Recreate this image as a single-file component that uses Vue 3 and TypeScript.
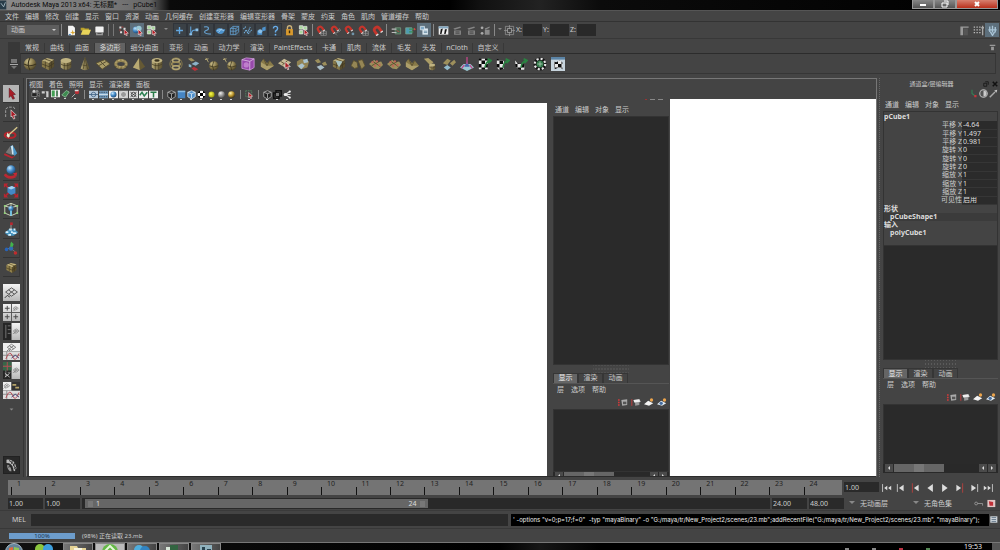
<script setup lang="ts">
import { ref } from 'vue'

interface Tab { name: string; size: string }
interface IconGroup { cls: string; icons: string[] }

const menus = ['文件', '编辑', '修改', '创建', '显示', '窗口', '资源', '动画', '几何缓存', '创建变形器', '编辑变形器', '骨架', '蒙皮', '约束', '角色', '肌肉', '管道缓存', '帮助']

const statusGroups: IconGroup[] = [
  { cls: 'w3', icons: ['new', 'open', 'save'] },
  { cls: 'sep double', icons: [] },
  { cls: 'w3', icons: ['sel-h', 'sel-o', 'sel-c'] },
  { cls: 'arrow', icons: [] },
  { cls: 'w8 boxed', icons: ['m-plus', 'm-joint', 'm-curve', 'm-surf', 'm-lattice', 'm-part', 'm-render', 'm-help'] },
  { cls: 'w2', icons: ['lock', 'sel-c'] },
  { cls: 'sep', icons: [] },
  { cls: 'w5', icons: ['mag-grid', 'mag-curve', 'mag-point', 'mag-grid', 'mag'] },
  { cls: 'sep', icons: [] },
  { cls: 'w2', icons: ['io-in', 'io-out'] },
  { cls: 'w1', icons: ['history'] },
  { cls: 'sep', icons: [] },
  { cls: 'w4', icons: ['clap', 'clap-dim', 'clap-dim', 'clap-set'] },
  { cls: 'sep', icons: [] },
  { cls: 'arrow small', icons: [] },
  { cls: 'w1', icons: ['target'] },
]
const lit = new Set(['sel-o', 'history', 'r-channel'])

const shelfTabs: Tab[] = [
  { name: '常规', size: 's2' }, { name: '曲线', size: 's2' }, { name: '曲面', size: 's2' },
  { name: '多边形', size: 's3' }, { name: '细分曲面', size: 's4' }, { name: '变形', size: 's2' },
  { name: '动画', size: 's2' }, { name: '动力学', size: 's3' }, { name: '渲染', size: 's2' },
  { name: 'PaintEffects', size: 's6' }, { name: '卡通', size: 's2' }, { name: '肌肉', size: 's2' },
  { name: '流体', size: 's2' }, { name: '毛发', size: 's2' }, { name: '头发', size: 's2' },
  { name: 'nCloth', size: 's3' }, { name: '自定义', size: 's3' },
]
const activeShelf = ref('多边形')

const shelfIcons = ['p-sphere', 'p-cube', 'p-cyl', 'p-cone', 'p-plane', 'p-torus', 'p-pyr', 'p-pipe', 'p-helix', 'p-soccer', 'p-sphere-s', 'p-sphere-s', 'p-smooth', 'p-bevel', 'p-select', 'p-combine', 'p-two', 'p-wedge', 'p-pair', 'p-dots', 'p-dots', 'p-bevel', 'p-tube', 'p-blue', 'p-axis', 'k-plane', 'k-cyl', 'k-sph', 'k-auto', 'k-uv']

const panelMenus = ['视图', '着色', '照明', '显示', '渲染器', '面板']
const panelGroups: string[][] = [
  ['v-cam', 'v-cam2', 'v-green', 'v-leaf', 'v-pin'],
  ['v-grid', 'v-film', 'v-ball', 'v-gate', 'v-cross', 'v-wave', 'v-text'],
  ['v-wire', 'v-blue', 'v-wblue', 'v-check', 'v-yellow', 'v-grey', 'v-gold'],
  ['v-iso'],
  ['v-wire', 'v-xray', 'v-share'],
]

const tools = ['t-select', 't-lasso', 't-paint', 't-move', 't-rotate', 't-scale', 't-univ', 't-soft', 't-show', 't-last']
const layouts = ['l-persp', 'l-four', 'l-outl', 'l-graph', 'l-hyper', 'l-mix', 'l-more']
const activeTool = ref('t-select')

const channelMenus = ['通道', '编辑', '对象', '显示']
const layerTabs = ['显示', '渲染', '动画']
const layerMenus = ['层', '选项', '帮助']
const layerIcons = ['y-a', 'y-b', 'y-c', 'y-d']
const attributes = ref([
  { label: '平移 X', value: '-4.64' }, { label: '平移 Y', value: '1.497' }, { label: '平移 Z', value: '0.981' },
  { label: '旋转 X', value: '0' }, { label: '旋转 Y', value: '0' }, { label: '旋转 Z', value: '0' },
  { label: '缩放 X', value: '1' }, { label: '缩放 Y', value: '1' }, { label: '缩放 Z', value: '1' },
  { label: '可见性', value: '启用' },
])
const playIcons = ['a-start', 'a-prevf', 'a-prevk', 'a-back', 'a-play', 'a-nextk', 'a-nextf', 'a-end']
const taskIcons = ['w-folder', 'w-green', 'w-qq', 'w-pic', 'w-maya']
const command = "' -options \"v=0;p=17;f=0\"  -typ \"mayaBinary\" -o \"G:/maya/tr/New_Project2/scenes/23.mb\";addRecentFile(\"G:/maya/tr/New_Project2/scenes/23.mb\", \"mayaBinary\");"
</script>

<template>
  <div class="app">
    <svg class="defs" aria-hidden="true">
      <defs>
        <radialGradient id="gTan" cx=".35" cy=".3" r=".8"><stop offset="0" stop-color="#e2d49a" /><stop offset=".5" stop-color="#96854e" /><stop offset="1" stop-color="#3c341c" /></radialGradient>
        <linearGradient id="gTanL"><stop offset="0" stop-color="#c8b97e" /><stop offset="1" stop-color="#5e522d" /></linearGradient>
        <radialGradient id="gBlue" cx=".35" cy=".3" r=".8"><stop offset="0" stop-color="#c2e4fa" /><stop offset=".5" stop-color="#3f86c4" /><stop offset="1" stop-color="#173c66" /></radialGradient>
        <radialGradient id="gYel" cx=".4" cy=".4" r=".7"><stop offset="0" stop-color="#ffff50" /><stop offset="1" stop-color="#8b8b00" /></radialGradient>
        <radialGradient id="gGrey" cx=".35" cy=".3" r=".8"><stop offset="0" stop-color="#eee" /><stop offset="1" stop-color="#444" /></radialGradient>
        <radialGradient id="gGold" cx=".35" cy=".3" r=".8"><stop offset="0" stop-color="#fff4b0" /><stop offset=".5" stop-color="#c09a30" /><stop offset="1" stop-color="#2c2410" /></radialGradient>
        <linearGradient id="gWhite" x2="0" y2="1"><stop offset="0" stop-color="#f4f4f4" /><stop offset="1" stop-color="#b8b8b8" /></linearGradient>
        <pattern id="chk" width="8" height="8" patternUnits="userSpaceOnUse"><rect width="8" height="8" fill="#fff" /><path d="M0 0h4v4H0zM4 4h4v4H4z" fill="#000" /></pattern>
      </defs>

      <symbol id="new" viewBox="0 0 16 16"><path d="M3 1h7l3 3v11H3z" fill="#f4f4f4" /><path d="M9 7l2 3 3 1-3 1-1 3-1-3-3-1 3-1z" fill="#d9a52c" /><path d="M4 13h3v2H4z" fill="#4e86b8" /></symbol>
      <symbol id="open" viewBox="0 0 16 16"><path d="M1 4h5l1 1h6v3H1z" fill="#b9a02a" /><path d="M1 14l3-7h12l-3 7z" fill="#e8d35a" /></symbol>
      <symbol id="save" viewBox="0 0 16 16"><rect x="2" y="2" width="12" height="9" rx="1" fill="#f2f2f2" /><path d="M3 11h10v4H3z" fill="#999" /><path d="M5 12h6v1H5z" fill="#333" /></symbol>
      <symbol id="cursor" viewBox="0 0 8 10"><path d="M1 0l6 6-3 .3L5.500 9 4 9.600 2.700 6.800 1 8z" fill="#b81c24" stroke="#fff" stroke-width=".8" /></symbol>
      <symbol id="sel-h" viewBox="0 0 16 16"><path d="M2 2h3v3H2zM8 4h3v3H8zM3 9h3v3H3z" fill="#ddd" /><path d="M5 3h3M3 6v3" stroke="#c44" /><use href="#cursor" x="8" y="6" width="8" height="10" /></symbol>
      <symbol id="sel-o" viewBox="0 0 16 16"><circle cx="6" cy="7" r="5" fill="url(#gBlue)" /><circle cx="10" cy="5" r="4" fill="#9cc8d4" /><use href="#cursor" x="8" y="6" width="8" height="10" /></symbol>
      <symbol id="sel-c" viewBox="0 0 16 16"><path d="M2 1h5v5H2zM8 2h5v5H8zM2 8h5v5H2z" fill="#a8d89c" stroke="#eee" /><use href="#cursor" x="8" y="6" width="8" height="10" /></symbol>
      <symbol id="m-plus" viewBox="0 0 16 16"><path d="M8 3v10M3 8h10" stroke="#62a6df" stroke-width="2" /></symbol>
      <symbol id="m-joint" viewBox="0 0 16 16"><path d="M4 2v11l3-5 6-1" fill="none" stroke="#62a6df" stroke-width="1.500" /><path d="M2 12h4v3H2zM11 5h4v4h-4z" fill="#8cc1e8" /></symbol>
      <symbol id="m-curve" viewBox="0 0 16 16"><path d="M3 3c9-2 7 4 3 5s-3 6 7 5" fill="none" stroke="#6aa8da" stroke-width="1.500" /></symbol>
      <symbol id="m-surf" viewBox="0 0 16 16"><path d="M1 8q4-5 8-3t6 1q-2 7-7 7T1 8z" fill="#4c92cc" /><path d="M3 8q5-3 10 0M5 11l5-6" fill="none" stroke="#c1e2f8" /></symbol>
      <symbol id="m-lattice" viewBox="0 0 16 16"><path d="M2 5l4-3h8v8l-4 4H2zM2 5h8l4-3M10 5v9M6 2v12M2 9h8l4-3" fill="none" stroke="#68abe0" /></symbol>
      <symbol id="m-part" viewBox="0 0 16 16"><path d="M3 12l3-5 2 4 4-8M2 6l4-4M9 13l5-6" stroke="#75b3e2" stroke-width="1.500" fill="none" stroke-dasharray="2 1" /></symbol>
      <symbol id="m-render" viewBox="0 0 16 16"><path d="M2 8h7v6H2zM9 4l5-2v6l-5 1z" fill="#4d92cd" /><circle cx="6" cy="9" r="3" fill="#8cc1e9" /></symbol>
      <symbol id="m-help" viewBox="0 0 16 16"><path d="M5 5q0-3 3-3t3 3q0 2-3 4v2" fill="none" stroke="#68adea" stroke-width="2" /><circle cx="8" cy="14" r="1.300" fill="#68adea" /></symbol>
      <symbol id="lock" viewBox="0 0 16 16"><path d="M5 7V4q0-3 3-3t3 3v3" fill="none" stroke="#ccb27a" stroke-width="2" /><rect x="3" y="6" width="10" height="9" fill="#d99a2e" /><path d="M7 8h2v4H7z" fill="#3a2808" /></symbol>
      <symbol id="mag" viewBox="0 0 16 16"><g transform="rotate(-35 8 8)"><path d="M4 13V7q0-4 4-4t4 4v6" fill="none" stroke="#c5352c" stroke-width="4" /><path d="M2 12h4v2H2zM10 12h4v2h-4z" fill="#ddd" /></g></symbol>
      <symbol id="mag-grid" viewBox="0 0 16 16"><path d="M7 9h8v6H7zM11 9v6M7 12h8" fill="none" stroke="#999" /><use href="#mag" width="13" height="13" /></symbol>
      <symbol id="mag-curve" viewBox="0 0 16 16"><path d="M13 5q5 3-1 5t-2 5" fill="none" stroke="#999" /><use href="#mag" width="13" height="13" /></symbol>
      <symbol id="mag-point" viewBox="0 0 16 16"><use href="#mag" width="13" height="13" /><circle cx="13" cy="13" r="2" fill="#7094a8" /></symbol>
      <symbol id="io-in" viewBox="0 0 16 16"><path d="M6 4h8v9H6z" fill="#456b54" stroke="#7a9c83" /><path d="M1 6h7M1 11h7" stroke="#bbb" stroke-width="1.500" /><path d="M8 8l4 2" stroke="#c44" /></symbol>
      <symbol id="io-out" viewBox="0 0 16 16"><path d="M1 4h9v9H1z" fill="#4d9bb0" stroke="#7dab92" /><path d="M6 6h8M6 10h6" stroke="#3d8d56" stroke-width="2" /><path d="M13 4l3 2-3 2z" fill="#d44" /></symbol>
      <symbol id="history" viewBox="0 0 16 16"><path d="M5 5h8v9H5z" fill="#dce8f0" /><path d="M2 2h6v5H2z" fill="#7fa8c6" stroke="#e4eef4" /><path d="M7 9h5M7 11h5" stroke="#49718e" /></symbol>
      <symbol id="clap" viewBox="0 0 16 16"><path d="M1 2h14v12H1z" fill="#eee" /><path d="M1 2h14v3H1z" fill="#83a7bf" /><path d="M4 6l3-1-2 8H3zM10 6h3l-2 7H9z" fill="#111" /></symbol>
      <symbol id="clap-dim" viewBox="0 0 16 16"><path d="M3 8h10v6H3zM2 5l10-3 1 2-9 3z" fill="#858585" /><path d="M5 10h6M5 12h6" stroke="#333" /></symbol>
      <symbol id="clap-set" viewBox="0 0 16 16"><path d="M7 7h7v7H7zM7 5l7-3v2l-6 3z" fill="#8b8b8b" /><circle cx="3" cy="4" r="2" fill="#aaa" /><circle cx="3" cy="12" r="2" fill="#aaa" /></symbol>
      <symbol id="target" viewBox="0 0 16 16"><path d="M2 2h12v12H2zM8 0v16M0 8h16" fill="none" stroke="#999" /><path d="M5 5h6v6H5z" fill="#444" stroke="#bbb" /></symbol>
      <symbol id="r-attr" viewBox="0 0 16 16"><path d="M2 2h12v2H6v11H2z" fill="#999" /><path d="M7 5h6v10H7z" fill="#555" /></symbol>
      <symbol id="r-tool" viewBox="0 0 16 16"><path d="M2 2v12M6 2v12M10 2v12" stroke="#bbb" stroke-width="2" stroke-dasharray="2 2" /><path d="M14 1v14M12 4h4" stroke="#aaa" stroke-width="2" /></symbol>
      <symbol id="r-channel" viewBox="0 0 16 16"><path d="M4 2v8M8 1v10M12 3v8M2 7h12M5 10l3 5 3-5" stroke="#a9c4d6" stroke-width="2" fill="none" /></symbol>

      <symbol id="p-sphere" viewBox="0 0 16 16"><circle cx="8" cy="8" r="7" fill="url(#gTan)" /><path d="M1 8q7 4 14 0M8 1q-4 7 0 14" fill="none" stroke="#3c341b" stroke-width="1.200" /></symbol>
      <symbol id="p-cube" viewBox="0 0 16 16"><path d="M1 4l6-3 8 2-6 4z" fill="#cbbb7f" /><path d="M1 4l8 3v8l-8-4z" fill="#91814b" /><path d="M9 7l6-4v8l-6 4z" fill="#5b4f2b" /><path d="M5 5v8M12 5v8M1 8l8 3 6-4M4 2l8 3" stroke="#40371c" fill="none" stroke-width=".8" /></symbol>
      <symbol id="p-cyl" viewBox="0 0 16 16"><path d="M2 4v8q6 5 12 0V4z" fill="url(#gTanL)" /><ellipse cx="8" cy="4" rx="6" ry="3" fill="#d2c38a" /><path d="M2 8q6 4 12 0M6 7v8M10 7v8" stroke="#4a4022" fill="none" stroke-width=".9" /></symbol>
      <symbol id="p-cone" viewBox="0 0 16 16"><path d="M8 0l5 13q-5 4-10 0z" fill="url(#gTanL)" /><path d="M8 1L6 14M8 1l3 13M5 9q3 2 6 0" stroke="#4a4022" fill="none" stroke-width=".8" /></symbol>
      <symbol id="p-plane" viewBox="0 0 16 16"><path d="M0 7l10-4 6 5-9 6z" fill="#b8a96c" stroke="#5c502c" /><path d="M5 5l6 6M3 10l9-5" stroke="#54492a" /></symbol>
      <symbol id="p-torus" viewBox="0 0 16 16"><ellipse cx="8" cy="8" rx="6" ry="4" fill="none" stroke="#a18f55" stroke-width="3.500" /><ellipse cx="8" cy="7.500" rx="6" ry="4" fill="none" stroke="#dbcc91" stroke-dasharray="2 2" /><path d="M3 10l-2 2M8 12v2M13 10l2 2" stroke="#4c4224" /></symbol>
      <symbol id="p-pyr" viewBox="0 0 16 16"><path d="M8 1L1 12l8 3z" fill="#c8b779" /><path d="M8 1l7 10-6 4z" fill="#6a5c32" /></symbol>
      <symbol id="p-pipe" viewBox="0 0 16 16"><use href="#p-cyl" width="16" height="16" /><ellipse cx="8" cy="4" rx="3" ry="1.500" fill="#3a321b" /></symbol>
      <symbol id="p-helix" viewBox="0 0 16 16"><circle cx="8" cy="8" r="7" fill="none" stroke="#978750" /><ellipse cx="8" cy="4" rx="4" ry="2" fill="none" stroke="#c3b37a" stroke-width="1.800" /><ellipse cx="8" cy="8" rx="5" ry="2" fill="none" stroke="#a8975c" stroke-width="1.800" /><ellipse cx="8" cy="12" rx="4" ry="2" fill="none" stroke="#c3b37a" stroke-width="1.800" /></symbol>
      <symbol id="p-soccer" viewBox="0 0 16 16"><path d="M1 2l4-1 4 3-4 1z" fill="#a8995f" /><path d="M5 8l5-3 4 2-4 3zM2 8l3 1v3l-3-1z" fill="#96c3dc" /><path d="M5 13l3-2 5 3-4 2z" fill="#c8323a" /></symbol>
      <symbol id="p-sphere-s" viewBox="0 0 16 16"><use href="#p-sphere" x="4" y="4" width="12" height="12" /><path d="M0 3l4-1M1 1l3 5" stroke="#cbbb7f" /></symbol>
      <symbol id="p-smooth" viewBox="0 0 16 16"><path d="M1 3l5-2 9 1v10l-5 3-9-2z" fill="#a34aba" stroke="#d79be6" /><path d="M1 3l9 2 5-3M10 5v10" stroke="#ecc9f4" fill="none" /><circle cx="6" cy="9" r="3" fill="#d087df" /></symbol>
      <symbol id="p-bevel" viewBox="0 0 16 16"><path d="M1 6l3-4 4 5 3-3 5 6-8 5-7-4z" fill="#92824a" /><path d="M1 6l7 4 8 0-8 5-7-4z" fill="#bbab70" /><path d="M4 2l4 8 3-6" fill="none" stroke="#5a4e2b" /></symbol>
      <symbol id="p-select" viewBox="0 0 16 16"><path d="M0 7l7-5 8 4-7 6z" fill="#d8cba2" /><path d="M3 5l8 5M5 9l6-5" stroke="#5a4e2b" /><use href="#cursor" x="7" y="5" width="8" height="10" /></symbol>
      <symbol id="p-combine" viewBox="0 0 16 16"><path d="M1 5l5-3 9 3-2 7-7 2-5-4z" fill="#9b8b55" /><path d="M2 10l5-3 3 3-4 4zM8 3l5-1 1 4-5 1z" fill="#b6d3df" /></symbol>
      <symbol id="p-two" viewBox="0 0 16 16"><path d="M1 4l4-2 3 4-4 1zM9 7l4-2 2 4-4 1z" fill="#a8995f" /><path d="M3 11l5-2 4 3-5 3z" fill="#b8cfdb" /></symbol>
      <symbol id="p-wedge" viewBox="0 0 16 16"><use href="#p-cube" width="16" height="16" /><path d="M4 4l8 1-4 7z" fill="#b5d3d2" /></symbol>
      <symbol id="p-pair" viewBox="0 0 16 16"><path d="M0 10l3-6 4 2 1 6-4 1zM8 4l5-1 3 7-4 4z" fill="#a19058" stroke="#5e522e" /></symbol>
      <symbol id="p-dots" viewBox="0 0 16 16"><path d="M0 8l6-5 3 3 5-1 2 4-5 5-5-1z" fill="#aa9a60" /><path d="M3 4l10 7M3 10l9-5" stroke="#594c28" /><g fill="#d26c5c"><circle cx="4" cy="6" r="1.300" /><circle cx="9" cy="5" r="1.300" /><circle cx="7" cy="10" r="1.300" /><circle cx="12" cy="9" r="1.300" /></g></symbol>
      <symbol id="p-tube" viewBox="0 0 16 16"><path d="M1 2l5-1 6 5-4 3z" fill="#b8a86b" /><use href="#p-cyl" x="6" y="7" width="9" height="9" /></symbol>
      <symbol id="p-blue" viewBox="0 0 16 16"><path d="M1 7l5-5 4 2-4 5zM9 7l5-4 2 3-4 4z" fill="#ab9b60" /><path d="M2 12l4-3 4 3-4 3z" fill="#9dccdf" /></symbol>
      <symbol id="p-axis" viewBox="0 0 16 16"><path d="M0 12l4-4h8l4 4-8 4z" fill="#a8dce8" /><path d="M5 11l3-6 3 6z" fill="#466cb8" /><path d="M8 0v8M5 9L2 13M11 9l3 4" stroke="#d34893" stroke-width="1.500" /></symbol>
      <symbol id="k-arm" viewBox="0 0 16 16"><path d="M8 12q1-7 6-8M11 2l4 2-3 3" fill="none" stroke="#288c42" stroke-width="2" /></symbol>
      <symbol id="k-plane" viewBox="0 0 16 16"><path d="M1 2h10v12H1z" fill="url(#chk)" /><use href="#k-arm" width="16" height="16" /></symbol>
      <symbol id="k-cyl" viewBox="0 0 16 16"><path d="M1 2l4 2h4v9l-5 2-3-3z" fill="url(#chk)" /><use href="#k-arm" width="16" height="16" /></symbol>
      <symbol id="k-sph" viewBox="0 0 16 16"><path d="M1 2q1 7 10 6l2 6q-7 2-11-3z" fill="url(#chk)" /><use href="#k-arm" width="16" height="16" /></symbol>
      <symbol id="k-auto" viewBox="0 0 16 16"><circle cx="8" cy="8" r="7.500" fill="#111" /><circle cx="8" cy="8" r="6" fill="none" stroke="#fff" stroke-width="2.500" stroke-dasharray="2.400 2.300" /><circle cx="8" cy="8" r="4" fill="#2e7f48" /><path d="M8 5v6M5 8h6" stroke="#b5dec0" /></symbol>
      <symbol id="k-uv" viewBox="0 0 16 16"><path d="M0 0h16v16H0z" fill="#d8e7f1" /><path d="M0 0h16v3H0z" fill="#5f8db4" /><path d="M3 5l3 1 4-2 3 2v8l-4-2-5 2z" fill="url(#chk)" /></symbol>

      <symbol id="v-cam" viewBox="0 0 12 12"><path d="M1 5h7v5H1zM8 7l3-2v5z" fill="#222" stroke="#aaa" stroke-width=".7" /><circle cx="4" cy="3" r="2" fill="#ccc" /><circle cx="8" cy="3" r="2" fill="#888" /></symbol>
      <symbol id="v-cam2" viewBox="0 0 12 12"><path d="M1 3h4v3H1zM6 3h4v8H7V5z" fill="#ccc" /></symbol>
      <symbol id="v-green" viewBox="0 0 12 12"><path d="M0 1h12v10H0z" fill="#eee" /><path d="M1 2h4v8H1z" fill="#41a052" /><path d="M7 2h2v8H7z" fill="#256334" /></symbol>
      <symbol id="v-leaf" viewBox="0 0 12 12"><path d="M1 8l6-6 4 2-5 7z" fill="#3e8b50" stroke="#99c3a1" /></symbol>
      <symbol id="v-pin" viewBox="0 0 12 12"><path d="M1 11L6 6" stroke="#ccc" /><circle cx="8" cy="4" r="3" fill="#b82e35" /><path d="M5 1h5v2H5z" fill="#ddd" /></symbol>
      <symbol id="v-grid" viewBox="0 0 12 12"><path d="M0 1h12v10H0z" fill="#b8cadb" /><circle cx="6" cy="6" r="3" fill="none" stroke="#355a7e" /><path d="M0 6h12" stroke="#355a7e" /></symbol>
      <symbol id="v-film" viewBox="0 0 12 12"><path d="M0 1h12v10H0z" fill="#7da4c4" /><path d="M0 3h12M0 9h12" stroke="#203040" stroke-dasharray="2 1" /><path d="M0 6h12" stroke="#e4edf4" /></symbol>
      <symbol id="v-ball" viewBox="0 0 12 12"><path d="M0 1h12v10H0z" fill="#eee" /><circle cx="6" cy="6" r="4" fill="url(#gBlue)" /></symbol>
      <symbol id="v-gate" viewBox="0 0 12 12"><path d="M0 1h12v10H0z" fill="#ccc" /><circle cx="6" cy="6" r="4" fill="#999" stroke="#eee" /></symbol>
      <symbol id="v-cross" viewBox="0 0 12 12"><path d="M0 1h12v10H0z" fill="#ddd" /><path d="M2 3l8 6M2 9l8-6" stroke="#333" /><circle cx="6" cy="6" r="3" fill="none" stroke="#333" /></symbol>
      <symbol id="v-wave" viewBox="0 0 12 12"><path d="M0 1h12v10H0z" fill="#eee" /><path d="M1 7l3-4 3 5 4-5" fill="none" stroke="#2c8052" stroke-width="2" /></symbol>
      <symbol id="v-text" viewBox="0 0 12 12"><path d="M0 1h12v10H0z" fill="#eee" /><path d="M2 3h8M6 3v7" stroke="#297a47" stroke-width="2" /></symbol>
      <symbol id="v-wire" viewBox="0 0 12 12"><path d="M1 3l5-2 5 2v6l-5 3-5-3zM1 3l5 2 5-2M6 5v6" fill="#222" stroke="#bbb" /></symbol>
      <symbol id="v-blue" viewBox="0 0 12 12"><path d="M1 1h10v10H1z" fill="#4685c3" /><path d="M1 1h10v2H1z" fill="#8abbe2" /></symbol>
      <symbol id="v-wblue" viewBox="0 0 12 12"><path d="M1 3l5-2 5 2v6l-5 3-5-3z" fill="#4f8fcb" stroke="#e1edf6" /><path d="M1 3l5 2 5-2M6 5v6" stroke="#e1edf6" fill="none" /></symbol>
      <symbol id="v-check" viewBox="0 0 12 12"><circle cx="6" cy="6" r="5" fill="url(#chk)" /></symbol>
      <symbol id="v-yellow" viewBox="0 0 12 12"><circle cx="6" cy="6" r="4" fill="url(#gYel)" /></symbol>
      <symbol id="v-grey" viewBox="0 0 12 12"><circle cx="6" cy="6" r="4.500" fill="url(#gGrey)" /></symbol>
      <symbol id="v-gold" viewBox="0 0 12 12"><circle cx="6" cy="6" r="4.500" fill="url(#gGold)" /></symbol>
      <symbol id="v-iso" viewBox="0 0 12 12"><path d="M1 1h8v8H1z" fill="none" stroke="#579067" stroke-dasharray="2 1" /><use href="#cursor" x="4" y="3" width="7" height="9" /></symbol>
      <symbol id="v-xray" viewBox="0 0 12 12"><path d="M1 4h7v7H1zM4 1h7v7H4z" fill="none" stroke="#111" stroke-width="2" /><path d="M4 4h4v4H4z" fill="#777" /></symbol>
      <symbol id="v-share" viewBox="0 0 12 12"><path d="M9 2L3 6l6 4M4 6h6" fill="none" stroke="#ddd" stroke-width="1.500" /><circle cx="3" cy="6" r="2" fill="#eee" /><circle cx="9" cy="2" r="1.500" fill="#eee" /><circle cx="9" cy="10" r="1.500" fill="#eee" /></symbol>

      <symbol id="t-select" viewBox="0 0 18 18"><path d="M7 3l7 7-3 .5 2 4-2 1-2-4-2 2z" fill="#a91c26" stroke="#501018" stroke-width=".6" /></symbol>
      <symbol id="t-lasso" viewBox="0 0 18 18"><path d="M3 14V5l3-2h6l2 3" fill="none" stroke="#aaa" stroke-dasharray="3 1.500" /><path d="M9 6l6 6-3 .5 1.500 3-1.500 1-2-3.500-1 1z" fill="#a91c26" stroke="#ddd" stroke-width=".8" /></symbol>
      <symbol id="t-paint" viewBox="0 0 18 18"><ellipse cx="8" cy="12" rx="6" ry="3" fill="none" stroke="#b3252c" stroke-width="2.500" /><path d="M6 12L16 3" stroke="#d7c88c" stroke-width="1.500" /><path d="M5 9l3 4-2 2-2-2z" fill="#f0f0d8" /></symbol>
      <symbol id="t-move" viewBox="0 0 18 18"><path d="M3 10l5-7 2 10z" fill="#777" /><path d="M8 3l3-1 5 9-3 3z" fill="#4997c9" /><path d="M9 3l2-1 1 11-2-1z" fill="#d3e6f0" /><path d="M2 11l8 4 4-1-4 3-9-4z" fill="#bd2631" /></symbol>
      <symbol id="t-rotate" viewBox="0 0 18 18"><path d="M2 12q4 6 12 2" stroke="#ba2833" stroke-width="3" fill="none" /><circle cx="9" cy="7" r="5" fill="url(#gBlue)" /><path d="M11 11l5-1-1 5z" fill="#c42a34" /></symbol>
      <symbol id="t-scale" viewBox="0 0 18 18"><path d="M2 2l14 14M16 2L2 16" stroke="#b12530" stroke-width="2" /><path d="M1 1h5L1 6zM17 1h-5l5 5zM1 17v-5l5 5zM17 17v-5l-5 5z" fill="#b62731" /><path d="M5 6l5-2 4 2v6l-5 2-4-3z" fill="#4488c5" /><path d="M5 6l5-2 4 2-5 2z" fill="#a6d3f0" /></symbol>
      <symbol id="t-univ" viewBox="0 0 18 18"><path d="M2 5l7-3 7 3v8l-7 3-7-3zM2 5l7 2 7-2M9 2v14" fill="none" stroke="#d7e0c4" /><circle cx="9" cy="8" r="3" fill="url(#gBlue)" /><path d="M9 10v6" stroke="#72c6eb" stroke-width="2" /><path d="M1 4h2v2H1zM15 4h2v2h-2zM1 12h2v2H1zM15 12h2v2h-2z" fill="#8bd173" /></symbol>
      <symbol id="t-soft" viewBox="0 0 18 18"><path d="M2 13l4-4 6-1 5 4-5 4H6z" fill="#4693be" /><path d="M3 12h3M7 9h3M11 13h4M6 15h3M12 9h2M9 12h2" stroke="#d9f0fa" stroke-width="2" /><path d="M9 9V3" stroke="#aaa" /><path d="M8 1h3v3H8z" fill="#bb2730" /></symbol>
      <symbol id="t-show" viewBox="0 0 18 18"><path d="M9 9V3M9 9H4M9 9l5 4" stroke="#777" /><circle cx="9" cy="9" r="2.500" fill="#326caf" /><path d="M9 1l3 3-1 3H8z" fill="#42b34b" /><circle cx="14" cy="14" r="2" fill="#c02b2d" /><circle cx="4" cy="10" r="2" fill="#2863b8" /></symbol>
      <symbol id="t-last" viewBox="0 0 18 18"><use href="#p-cube" x="3" y="3" width="13" height="13" /></symbol>
      <symbol id="diamond" viewBox="0 0 18 14"><path d="M2 7l7-5 7 5-7 5zM5.500 4.500l7 5M5.500 9.500l7-5" fill="none" stroke="#444" /><path d="M1 14l3-3 3 2" stroke="#222" fill="none" /></symbol>
      <symbol id="l-persp" viewBox="0 0 18 18"><path d="M0 0h18v18H0z" fill="url(#gWhite)" /><use href="#diamond" x="1" y="2" width="16" height="13" /></symbol>
      <symbol id="l-four" viewBox="0 0 18 18"><path d="M0 0h18v18H0z" fill="url(#gWhite)" /><path d="M9 0v18M0 9h18" stroke="#555" /><path d="M4.500 2v5M2 4.500h5M4.500 11v5M2 13.500h5M13.500 11v5M11 13.500h5" stroke="#444" /><use href="#diamond" x="10" y="1" width="7" height="7" /></symbol>
      <symbol id="l-outl" viewBox="0 0 18 18"><path d="M0 0h18v18H0z" fill="#252525" /><path d="M3 2v14M5 3h3M5 7h3M5 11h3" stroke="#777" /><path d="M9 0h9v18H9z" fill="url(#gWhite)" /><use href="#diamond" x="10" y="4" width="8" height="9" /></symbol>
      <symbol id="graph" viewBox="0 0 18 9"><path d="M0 0h18v9H0z" fill="#ddd" /><path d="M4 0v9M0 4h18" stroke="#888" /><path d="M3 8q4-11 7-3t7-3" fill="none" stroke="#b84a55" /><path d="M9 7l4-3 4 3" fill="none" stroke="#447" /></symbol>
      <symbol id="l-graph" viewBox="0 0 18 18"><path d="M0 0h18v9H0z" fill="#eee" /><use href="#diamond" y="0" x="2" width="14" height="9" /><use href="#graph" y="9" width="18" height="9" /></symbol>
      <symbol id="l-hyper" viewBox="0 0 18 18"><use href="#l-outl" width="18" height="18" /><path d="M0 0h9v9H0z" fill="#376648" /><path d="M4 0h1v9H4zM0 4h9v1H0z" fill="#b94c56" /><path d="M2 12l5 4M7 12l-5 4" stroke="#ccc" /></symbol>
      <symbol id="l-mix" viewBox="0 0 18 18"><path d="M0 0h9v9H0z" fill="#eee" /><path d="M9 0h9v9H9z" fill="#333" /><use href="#diamond" width="8" height="8" /><path d="M10 2h4v2h-4zM13 5h4v2h-4z" fill="#b6a368" /><use href="#graph" y="9" width="18" height="9" /></symbol>
      <symbol id="l-more" viewBox="0 0 18 18"><path d="M7 8l2 2 2-2z" fill="#888" /></symbol>
      <symbol id="maya" viewBox="0 0 18 18"><path d="M3 2q10-1 12 10l-2 4q-2 0-2-3Q10 6 3 6z" fill="#bbb" /><path d="M4 8q4 0 5 8H7Q3 12 4 8z" fill="#999" /><path d="M6 3q6 2 8 12M10 3l-1 4M13 6l-2 4M15 10l-3 3M5 11l3-1" fill="none" stroke="#222" /></symbol>

      <symbol id="y-a" viewBox="0 0 12 10"><path d="M1 1v8" stroke="#d23a3a" stroke-dasharray="2 1" stroke-width="2" /><path d="M4 2l7-1v7l-6 1z" fill="#aaa" /><path d="M6 4h4v3H6z" fill="#555" /></symbol>
      <symbol id="y-b" viewBox="0 0 12 10"><path d="M1 1v8" stroke="#d23a3a" /><path d="M3 2l7-1 2 3-2 1v3l-5 1V6z" fill="#999" /><path d="M3 2l7-1 1 3-7 1z" fill="#eee" /></symbol>
      <symbol id="y-c" viewBox="0 0 12 10"><path d="M0 7l5-4 6 3-5 3z" fill="#f4f4f4" /><circle cx="9" cy="2" r="2" fill="#eda54c" /></symbol>
      <symbol id="y-d" viewBox="0 0 12 10"><path d="M0 7l5-4 6 3-5 3z" fill="#e4edf4" /><circle cx="5" cy="6" r="2" fill="#456c9e" /><circle cx="9" cy="2" r="2" fill="#eda54c" /></symbol>
      <symbol id="c-axis" viewBox="0 0 12 12"><path d="M4 1v5l5 4" fill="none" stroke="#348056" stroke-width="1.500" /><path d="M7 8h3v3H7z" fill="#c8333b" /></symbol>
      <symbol id="c-half" viewBox="0 0 12 12"><circle cx="6" cy="6" r="5" fill="#555" stroke="#bbb" stroke-width="1.500" /><path d="M6 2a4 4 0 010 8z" fill="#ccc" /></symbol>
      <symbol id="c-pick" viewBox="0 0 12 12"><path d="M1 11l7-7" stroke="#aaa" stroke-width="2" /><path d="M7 2l4-1-1 4z" fill="#ccc" /></symbol>
      <symbol id="a-play" viewBox="0 0 14 12"><path d="M4 1l7 5-7 5z" fill="#ddd" /></symbol>
      <symbol id="a-back" viewBox="0 0 14 12"><path d="M10 1L3 6l7 5z" fill="#ddd" /></symbol>
      <symbol id="a-start" viewBox="0 0 14 12"><path d="M2 1v10" stroke="#ddd" /><path d="M8 3L4 6l4 3zM13 3L9 6l4 3z" fill="#ddd" /></symbol>
      <symbol id="a-end" viewBox="0 0 14 12"><path d="M12 1v10" stroke="#ddd" /><path d="M1 3l4 3-4 3zM6 3l4 3-4 3z" fill="#ddd" /></symbol>
      <symbol id="a-prevf" viewBox="0 0 14 12"><path d="M3 1v10" stroke="#ddd" /><path d="M11 2L5 6l6 4z" fill="#ddd" /></symbol>
      <symbol id="a-nextf" viewBox="0 0 14 12"><path d="M11 1v10" stroke="#ddd" /><path d="M3 2l6 4-6 4z" fill="#ddd" /></symbol>
      <symbol id="a-prevk" viewBox="0 0 14 12"><path d="M3 0v12" stroke="#c8403c" /><path d="M11 2L5 6l6 4z" fill="#ddd" /></symbol>
      <symbol id="a-nextk" viewBox="0 0 14 12"><path d="M11 0v12" stroke="#c8403c" /><path d="M3 2l6 4-6 4z" fill="#ddd" /></symbol>
      <symbol id="key" viewBox="0 0 14 12"><circle cx="3" cy="6" r="2" fill="none" stroke="#aaa" /><path d="M5 6h7v3" fill="none" stroke="#aaa" /></symbol>
      <symbol id="autokey" viewBox="0 0 14 12"><path d="M2 1h11v10H2z" fill="#e3c6c6" /><path d="M4 3l6 1v5H5z" fill="#c13038" /></symbol>
      <symbol id="script" viewBox="0 0 14 12"><path d="M2 1h11v10H2z" fill="#ccd4da" /><path d="M4 3h7M4 6h7M4 9h7" stroke="#385068" /></symbol>

      <symbol id="w-start" viewBox="0 0 18 18"><circle cx="9" cy="9" r="8.500" fill="#64839a" stroke="#a9bac4" /><path d="M4 5l4-1v4H4z" fill="#e36a3d" /><path d="M9 4l5 1v4H9z" fill="#8fc556" /></symbol>
      <symbol id="w-msn" viewBox="0 0 18 18"><circle cx="5" cy="6" r="5" fill="#8cc63e" /><circle cx="13" cy="6" r="5" fill="#3d9fdd" /></symbol>
      <symbol id="w-folder" viewBox="0 0 18 18"><path d="M1 3h7l1 2h8v12H1z" fill="#e5d394" /><path d="M5 5h8v3H5z" fill="#f7f4e0" /></symbol>
      <symbol id="w-green" viewBox="0 0 18 18"><circle cx="9" cy="9" r="8" fill="#64b847" /><path d="M4 8l5-5 5 5" fill="none" stroke="#e3f8d7" stroke-width="2" /></symbol>
      <symbol id="w-qq" viewBox="0 0 18 18"><circle cx="6" cy="7" r="5" fill="#4faedd" /><circle cx="12" cy="8" r="5" fill="#3284c2" /></symbol>
      <symbol id="w-pic" viewBox="0 0 18 18"><path d="M1 4h12v12H1z" fill="#d8e6d8" /><path d="M5 2h8v12H5z" fill="#326541" /></symbol>
      <symbol id="w-maya" viewBox="0 0 18 18"><path d="M3 2h12v14H3z" fill="#8fb1bd" /><path d="M5 4h3v7H5zM10 6h4v6h-4z" fill="#28434f" /></symbol>
    </svg>

    <header class="titlebar">
      <svg class="logo" viewBox="0 0 10 10" aria-hidden="true"><path d="M0 0h7v10H0z" fill="#283c48" /><path d="M1 3l3 4 2-5" fill="none" stroke="#a4b8c1" /></svg>
      <h1>Autodesk Maya 2013 x64: 无标题*&nbsp;&nbsp; ---&nbsp;&nbsp; pCube1</h1>
      <div class="winbtns">
        <button aria-label="最小化"><svg viewBox="0 0 10 8"><path d="M2 4h6v2H2z" fill="#fff" /></svg></button>
        <button aria-label="还原"><svg viewBox="0 0 10 8"><path d="M2 3h5v4H2zM4 1h4v4" fill="none" stroke="#fff" /></svg></button>
        <button class="close" aria-label="关闭"><svg viewBox="0 0 10 8"><path d="M3 2l4 4M7 2L3 6" stroke="#fff" stroke-width="2" /></svg></button>
      </div>
    </header>

    <nav class="menubar"><button v-for="m in menus" :key="m">{{ m }}</button></nav>

    <div class="status">
      <div class="mode"><select aria-label="菜单集"><option>动画</option></select></div>
      <div class="sep"></div>
      <div v-for="(g, i) in statusGroups" :key="i" class="group" :class="g.cls">
        <button v-for="(ic, k) in g.icons" :key="k" :class="{ lit: lit.has(ic) }" :aria-label="ic"><svg><use :href="'#' + ic" /></svg></button>
      </div>
      <label class="coord">X:<input type="text"></label>
      <label class="coord">Y:<input type="text"></label>
      <label class="coord">Z:<input type="text"></label>
      <div class="group w3 right">
        <button v-for="ic in ['r-attr', 'r-tool', 'r-channel']" :key="ic" :class="{ lit: lit.has(ic) }" :aria-label="ic"><svg><use :href="'#' + ic" /></svg></button>
      </div>
    </div>

    <section class="shelf">
      <div class="shelf-side"><i></i><i class="thin"></i><b></b></div>
      <div class="shelf-main">
        <div class="shelf-tabs">
          <button v-for="t in shelfTabs" :key="t.name" :class="[t.size, { active: t.name === activeShelf }]" @click="activeShelf = t.name">{{ t.name }}</button>
          <svg class="trash" viewBox="0 0 10 10" aria-hidden="true"><path d="M1 1h8v2H1zM3 4h4v5H3z" fill="#999" /></svg>
        </div>
        <div class="shelf-icons">
          <div class="shelf-grid"><button v-for="(ic, i) in shelfIcons" :key="i" :aria-label="ic"><svg><use :href="'#' + ic" /></svg></button></div>
        </div>
      </div>
    </section>

    <main class="work">
      <aside class="toolbox">
        <div class="tools"><button v-for="t in tools" :key="t" :class="{ active: t === activeTool }" :aria-label="t" @click="activeTool = t"><svg><use :href="'#' + t" /></svg></button></div>
        <div class="layouts"><button v-for="l in layouts" :key="l" :aria-label="l"><svg><use :href="'#' + l" /></svg></button></div>
        <button class="brand" aria-label="Maya"><svg><use href="#maya" /></svg></button>
      </aside>

      <section class="panel">
        <div class="view-main">
          <nav class="pmenu"><button v-for="m in panelMenus" :key="m">{{ m }}</button></nav>
          <div class="ptools">
            <div v-for="(g, i) in panelGroups" :key="i" class="pgroup"><button v-for="(ic, k) in g" :key="k" :aria-label="ic"><svg><use :href="'#' + ic" /></svg></button></div>
          </div>
          <div class="canvas"></div>
        </div>
        <div class="inner">
          <div class="sliver"><i class="red"></i><i></i><i></i></div>
          <nav class="cmenu"><button v-for="m in channelMenus" :key="m">{{ m }}</button></nav>
          <div class="dark list"></div>
          <div class="grip"></div>
          <div class="ltabs"><button v-for="(t, i) in layerTabs" :key="t" :class="{ active: i === 0 }">{{ t }}</button></div>
          <nav class="lmenu"><button v-for="m in layerMenus" :key="m">{{ m }}</button></nav>
          <div class="licons"><button v-for="ic in layerIcons" :key="ic" :aria-label="ic"><svg><use :href="'#' + ic" /></svg></button></div>
          <div class="dark layers"></div>
          <div class="scroll cut"><button class="l" aria-label="向左"></button><i></i><span></span><button class="l" aria-label="向左"></button><button class="r" aria-label="向右"></button></div>
        </div>
        <div class="view-side"><div class="canvas"></div></div>
      </section>

      <aside class="channel">
        <div class="ctitle"><span>通道盒/层编辑器</span><button aria-label="浮动"><svg viewBox="0 0 8 8"><path d="M1 3h4v4H1zM3 1h4v4" fill="none" stroke="#111" /></svg></button><button aria-label="关闭"><svg viewBox="0 0 8 8"><path d="M1 1l6 6M7 1L1 7" stroke="#111" stroke-width="2" /></svg></button></div>
        <div class="cicons"><svg v-for="ic in ['c-axis', 'c-half', 'c-pick']" :key="ic"><use :href="'#' + ic" /></svg></div>
        <nav class="cmenu"><button v-for="m in channelMenus" :key="m">{{ m }}</button></nav>
        <div class="attrs">
          <h2>pCube1</h2>
          <table><tbody>
            <tr v-for="(a, i) in attributes" :key="i"><th><label :for="'attr' + i">{{ a.label }}</label></th><td><input :id="'attr' + i" v-model="a.value" type="text"></td></tr>
          </tbody></table>
          <h3>形状</h3><p class="shape">pCubeShape1</p>
          <h3>输入</h3><p>polyCube1</p>
        </div>
        <div class="dark list"></div>
        <div class="grip"></div>
        <div class="ltabs"><button v-for="(t, i) in layerTabs" :key="t" :class="{ active: i === 0 }">{{ t }}</button></div>
        <nav class="lmenu"><button v-for="m in layerMenus" :key="m">{{ m }}</button></nav>
        <div class="licons"><button v-for="ic in layerIcons" :key="ic" :aria-label="ic"><svg><use :href="'#' + ic" /></svg></button></div>
        <div class="dark layers"></div>
        <div class="scroll"><button class="l" aria-label="向左"></button><i></i><span></span><button class="l" aria-label="向左"></button><button class="r" aria-label="向右"></button></div>
      </aside>
    </main>

    <div class="timeline">
      <div class="ruler"><span v-for="n in 24" :key="n">{{ n }}</span></div>
      <input class="num now" type="text" value="1.00" aria-label="当前时间">
      <div class="play"><button v-for="ic in playIcons" :key="ic" :aria-label="ic"><svg><use :href="'#' + ic" /></svg></button></div>
    </div>

    <div class="range">
      <input class="num" type="text" value="1.00" aria-label="动画开始">
      <input class="num" type="text" value="1.00" aria-label="播放开始">
      <div class="track"><div class="thumb"><i></i><span>1</span><span class="end">24</span><i></i></div></div>
      <input class="num" type="text" value="24.00" aria-label="播放结束">
      <input class="num" type="text" value="48.00" aria-label="动画结束">
      <button class="drop">无动画层</button>
      <button class="drop">无角色集</button>
      <div class="keys"><svg><use href="#key" /></svg><svg><use href="#autokey" /></svg></div>
    </div>

    <div class="cmd">
      <label for="mel">MEL</label><input id="mel" type="text">
      <output>{{ command }}</output>
      <button aria-label="脚本编辑器"><svg><use href="#script" /></svg></button>
    </div>

    <div class="help"><div class="progress">100%</div><span>(98%) 正在读取 23.mb</span></div>

    <footer class="taskbar">
      <svg class="first"><use href="#w-start" /></svg>
      <svg><use href="#w-msn" /></svg>
      <button v-for="(ic, i) in taskIcons" :key="ic" :class="{ on: i === 1 }" :aria-label="ic"><svg><use :href="'#' + ic" /></svg></button>
      <div class="tray"><i></i><i></i><i class="r"></i><i class="g"></i></div>
      <time>19:53</time><div class="peek"></div>
    </footer>
  </div>
</template>

<style>
html, body { margin: 0; background: #444; }
</style>

<style scoped>
* { box-sizing: border-box; }
.app { height: 100vh; display: flex; flex-direction: column; overflow: hidden; background: #444; color: #ccc; font: 7px/8px "Noto Sans", "Noto Sans CJK SC", sans-serif; }
.defs { position: absolute; width: 0; height: 0; }
button, input, select { font: inherit; color: inherit; background: none; border: 0; padding: 0; margin: 0; border-radius: 0; white-space: nowrap; min-width: 0; }
svg { display: block; }
h1, h2, h3, p { margin: 0; font-size: 7px; }
button { display: flex; align-items: center; justify-content: center; }

.titlebar { height: 10px; flex: none; display: flex; align-items: center; background: linear-gradient(90deg, #8a8a8a 0, #777 11%, #666 15%, #0a0a0a 17%, #000 45%, #111 48%, #222 54%, #0b0b0b 60%, #000); }
.logo { width: 9px; height: 10px; margin-right: 2px; }
h1 { font-family: Roboto, "Noto Sans CJK SC", sans-serif; font-weight: 400; color: #0a0a0a; flex: 1; white-space: nowrap; }
.winbtns { display: flex; height: 10px; width: 88px; padding: 0 2px 1px 0; }
.winbtns button { flex: 1; background: linear-gradient(#888, #555); border: 1px solid #999; border-top: 0; }
.winbtns svg { width: 10px; height: 8px; }
.winbtns .close { flex: 2; background: linear-gradient(#d8806f, #b9301c); }

.menubar { height: 12px; flex: none; display: flex; align-items: center; gap: 6px; padding: 2px 0 0 5px; border-top: 1px solid #555; border-bottom: 1px solid #333; }

.status { height: 17px; flex: none; display: flex; align-items: center; padding-left: 7px; border-bottom: 1px solid #383838; }
.mode { width: 52px; height: 10px; background: #5e5e5e; display: flex; align-items: center; padding-right: 3px; }
.mode select { flex: 1; height: 10px; padding-left: 4px; appearance: none; outline: 0; }
.mode::after { content: ""; border: 2px solid transparent; border-top-color: #ccc; margin-top: 2px; }
.group { display: flex; height: 14px; flex: none; }
.group button { flex: 1; height: 14px; }
.group svg { width: 11px; height: 11px; }
.w1 { width: 14px; } .w2 { width: 28px; } .w3 { width: 42px; } .w4 { width: 56px; } .w5 { width: 69px; } .w8 { width: 109px; }
.boxed button { background: #3b4146; border: 1px solid #30343a; }
.lit { background: #5d6f7c; }
.sep { width: 5px; height: 12px; background: linear-gradient(#888, #888) center / 1px 100% no-repeat; }
.double { width: 10px; background: linear-gradient(90deg, #777 1px, transparent 1px) 2px 0 / 5px 100%; }
.arrow { width: 15px; justify-content: center; align-items: center; }
.arrow::after { content: ""; border: 2px solid transparent; border-top-color: #888; }
.arrow.small { width: 5px; }
.coord { display: flex; align-items: center; width: 27px; flex: none; justify-content: space-between; }
.coord input { width: 19px; height: 12px; background: #292929; margin-right: 1px; }
.right { margin-left: auto; margin-right: 1px; }

.shelf { height: 35px; flex: none; display: flex; padding: 3px 4px 0 8px; }
.shelf-side { width: 12px; background: #383838; display: flex; flex-direction: column; align-items: center; justify-content: flex-end; gap: 1px; padding-bottom: 2px; }
.shelf-side i { width: 6px; height: 4px; background: #777; }
.shelf-side i.thin { width: 8px; height: 1px; background: #aaa; }
.shelf-side b { border: 3px solid transparent; border-top-color: #777; }
.shelf-main { flex: 1; }
.shelf-tabs { display: flex; height: 11px; }
.shelf-tabs button { height: 10px; margin-top: 1px; border-right: 1px solid #383838; }
.shelf-tabs .active { background: #626262; color: #ddd; }
.s2 { width: 25px; } .s3 { width: 31px; } .s4 { width: 38px; } .s6 { width: 47px; }
.trash { width: 7px; height: 9px; margin: 1px 0 0 auto; }
.shelf-icons { height: 21px; border: 1px solid #363636; border-top-color: #2c2c2c; background: #444; }
.shelf-grid { width: 546px; display: grid; grid-template-columns: repeat(30, 1fr); height: 20px; }
.shelf-grid svg { width: 14px; height: 14px; opacity: .88; }

.work { flex: 1; min-height: 0; display: flex; padding: 4px 0 1px; }
.toolbox { width: 24px; flex: none; display: flex; flex-direction: column; padding: 7px 3px 3px; border-right: 1px solid #353535; }
.tools, .layouts { display: flex; flex-direction: column; justify-content: space-between; }
.tools { flex: 193 1 0; }
.layouts { flex: 136 1 0; margin-top: 6px; }
.toolbox button { width: 17px; height: 18px; }
.tools button { border-bottom: 1px solid #333; border-right: 1px solid #383838; }
.toolbox svg { width: 17px; height: 17px; }
.tools .active { background: #b4b4b4; }
.toolbox .brand { background: #292929; border: 1px solid #222; margin-top: 37px; }

.panel { flex: 1; min-width: 0; display: grid; grid-template-columns: 520fr 123fr 206fr; border-top: 1px solid #777; border-left: 1px solid #777; border-right: 1px solid #777; border-bottom: 1px solid #2c2c2c; margin-left: 2px; }
.view-main { min-width: 0; display: flex; flex-direction: column; border-left: 2px solid #3a3a3a; }
.pmenu { display: flex; gap: 6px; padding: 1px 0 0 0; height: 10px; }
.ptools { display: flex; height: 14px; gap: 4px; padding-left: 1px; }
.pgroup { display: flex; }
.pgroup + .pgroup { border-left: 1px solid #888; padding-left: 3px; height: 9px; margin-top: 1px; }
.pgroup button { width: 10px; height: 9px; box-shadow: 0 5px 0 -4px #ccc; }
.pgroup svg { width: 9px; height: 9px; }
.canvas { flex: 1; background: #fff; }
.inner { min-width: 0; display: flex; flex-direction: column; padding: 20px 1px 0 6px; }
.sliver { height: 5px; flex: none; display: flex; justify-content: flex-end; gap: 3px; padding-right: 6px; }
.sliver i { width: 5px; height: 1px; background: #888; }
.sliver .red { width: 2px; background: #933; }
.view-side { min-width: 0; display: flex; flex-direction: column; padding-top: 20px; }

.cmenu { display: flex; gap: 6px; padding-left: 2px; height: 12px; flex: none; align-items: center; }
.dark { background: #2a2a2a; border: 1px solid #333; }
.inner .list { flex: 250 1 0; }
.grip { height: 8px; flex: none; margin: 0 40px; background: radial-gradient(#5a5a5a 1px, transparent 1px) center / 3px 4px; }
.ltabs { display: flex; height: 11px; flex: none; border-bottom: 1px solid #555; }
.ltabs button { width: 25px; border: 1px solid #363636; border-bottom: 0; }
.ltabs .active { background: #656565; color: #eee; }
.lmenu { display: flex; gap: 7px; padding-left: 4px; height: 12px; flex: none; align-items: center; }
.licons { display: flex; justify-content: flex-end; gap: 3px; height: 13px; flex: none; padding-right: 2px; }
.licons svg { width: 10px; height: 9px; }
.inner .layers { flex: 62 1 0; }
.scroll { display: flex; height: 9px; flex: none; background: #292929; padding: 0 2px; gap: 1px; }
.scroll button { width: 8px; height: 8px; background: #4b4b4b; }
.scroll button::before { content: ""; border: 2px solid transparent; }
.scroll .l::before { border-right-color: #ddd; border-left-width: 0; }
.scroll .r::before { border-left-color: #ddd; border-right-width: 0; }
.scroll i { width: 50px; height: 8px; background: linear-gradient(90deg, #666 40%, #777 40%, #777 60%, #666 60%); }
.scroll span { flex: 1; }
.cut { height: 4px; overflow: hidden; }

.channel { width: 121px; flex: none; display: flex; flex-direction: column; padding: 2px 2px 4px 3px; margin-left: 2px; border-left: 1px dotted #666; }
.ctitle { display: flex; height: 8px; flex: none; gap: 3px; font-size: 6px; }
.ctitle span { flex: 1; text-align: center; }
.ctitle svg { width: 6px; height: 6px; }
.cicons { display: flex; justify-content: flex-end; gap: 1px; height: 11px; flex: none; align-items: center; }
.cicons svg { width: 9px; height: 9px; }
.attrs { border: 1px solid #333; border-bottom: 0; flex: none; padding-top: 1px; height: 134px; }
h2, h3, .attrs p { font-weight: 700; color: #ddd; line-height: 8px; height: 8px; }
.attrs p { padding-left: 6px; }
.attrs .shape { background: #3b3b3b; }
.attrs table { border-collapse: collapse; margin-left: auto; height: 84px; }
.attrs th, .attrs td { padding: 0; font-weight: 400; text-align: right; }
.attrs td { width: 35px; background: #2b2b2b; border-bottom: 1px solid #363636; }
.attrs td input { width: 34px; height: 7px; display: block; color: #ddd; padding-left: 1px; }
.channel .list { flex: 115 1 0; }
.channel .layers { flex: 60 1 0; border-bottom: 0; }

.timeline { display: flex; height: 18px; flex: none; padding: 2px 4px 1px 8px; align-items: stretch; }
.ruler { flex: 1; display: grid; grid-template-columns: repeat(24, 1fr); background: #747474; padding: 0 4px 0 3px; color: #222; line-height: 7px; }
.ruler span { padding-left: 6px; background: linear-gradient(#111, #111) left bottom / 1px 8px no-repeat; }
.num { width: 35px; background: #2a2a2a; height: 11px; flex: none; padding-left: 1px; }
.now { margin: 2px 0 0 2px; height: 10px; }
.play { width: 117px; display: flex; align-items: center; }
.play button { flex: 1; }
.play svg { width: 11px; height: 10px; }

.range { display: flex; height: 15px; flex: none; align-items: center; padding: 2px 4px 1px 8px; gap: 2px; border-bottom: 1px solid #3a3a3a; }
.track { flex: 1; height: 11px; background: #292929; padding-left: 3px; }
.thumb { width: 50%; height: 9px; margin-top: 1px; background: #666; display: flex; align-items: center; gap: 3px; padding: 0 3px; color: #ddd; }
.thumb i { width: 5px; height: 6px; background: #777; }
.thumb .end { margin-left: auto; }
.drop { width: 62px; justify-content: flex-start; gap: 5px; padding-left: 3px; }
.drop::before { content: ""; border: 3px solid transparent; border-top-color: #888; margin-top: 1px; }
.keys { display: flex; width: 22px; justify-content: space-between; }
.keys svg { width: 10px; height: 9px; }

.cmd { display: flex; height: 17px; flex: none; align-items: center; padding: 0 2px 0 12px; }
.cmd label { width: 19px; }
.cmd input { flex: 1; height: 12px; background: #2a2a2a; }
.cmd output { width: 478px; height: 12px; font-family: Inter, "Noto Sans CJK SC", sans-serif; font-size: 6px; line-height: 12px; background: #000; margin: 0 0 0 3px; padding-left: 2px; color: #eee; white-space: pre; overflow: hidden; }
.cmd button { width: 9px; }
.cmd svg { width: 9px; height: 9px; }

.help { display: flex; height: 15px; flex: none; align-items: center; gap: 7px; padding-left: 9px; border-bottom: 1px solid #777; border-top: 1px solid #383838; font-size: 6px; }
.progress { width: 66px; height: 6px; line-height: 6px; background: #6d9dcc; color: #14304c; text-align: center; }

.taskbar { display: flex; height: 7px; flex: none; overflow: hidden; background: linear-gradient(90deg, #111, #000 50%, #161616 54%, #000 60%); gap: 2px; align-items: flex-start; }
.taskbar svg { width: 18px; height: 18px; flex: none; }
.taskbar .first { margin: 0 10px 0 5px; }
.taskbar button { width: 30px; height: 18px; flex: none; background: linear-gradient(90deg, #777, #444); border: 1px solid #888; }
.taskbar button:first-of-type { margin-left: 8px; }
.taskbar .on { background: #bbb; }
.tray { display: flex; gap: 23px; margin: 5px 32px 0 auto; }
.tray i { width: 4px; height: 2px; background: #888; }
.tray .r { background: #b34; } .tray .g { background: #585; }
time { font-size: 7px; line-height: 8px; color: #eee; }
.peek { width: 8px; height: 7px; background: #555; margin-left: 8px; }
</style>
